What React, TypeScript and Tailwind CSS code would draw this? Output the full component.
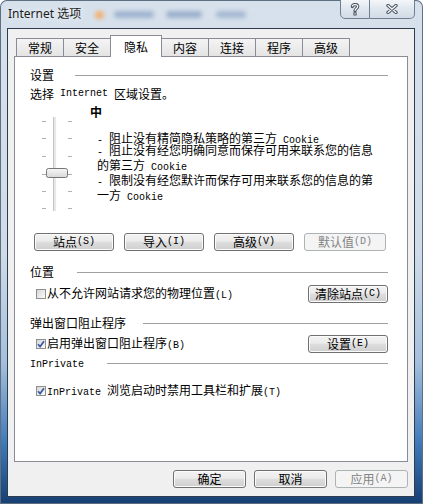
import type { ReactNode } from 'react';

// SimSun-like half-width latin: 6px per char
const M = ({ children }: { children: ReactNode }) => (
    <span className="[font-family:'Liberation_Mono',monospace] text-[10px]">{children}</span>
);

function Btn({ children, className = '', disabled = false }: { children: ReactNode; className?: string; disabled?: boolean }) {
    return (
        <div
            className={
                'h-[18px] flex items-center justify-center rounded-[3px] border text-[12px] leading-none ' +
                (disabled
                    ? 'border-[#adb2b5] bg-[#f4f4f4] text-[#838383] '
                    : 'border-[#707070] bg-[linear-gradient(#f3f3f3_0%,#ebebeb_45%,#dddddd_52%,#cfcfcf_100%)] shadow-[inset_0_0_0_1px_#fbfbfb] text-black ') +
                className
            }
        >
            {children}
        </div>
    );
}

function Header({ children, labelW }: { children: ReactNode; labelW: string }) {
    return (
        <div className="flex items-center h-[16px]">
            <div className={labelW + ' shrink-0'}>{children}</div>
            <div className="flex-1 h-px bg-[#a0a0a0]" />
        </div>
    );
}

function Check({ checked = false }: { checked?: boolean }) {
    return (
        <span className="w-[10px] h-[10px] shrink-0 border border-[#8e8f8f] bg-[linear-gradient(135deg,#d6d6d6,#fbfbfb)] flex items-center justify-center">
            {checked && (
                <svg width="8" height="8" viewBox="0 0 8 8">
                    <path d="M1 4.2 L3.1 6.6 L7 1.2" stroke="#3b5aa3" strokeWidth="1.7" fill="none" />
                </svg>
            )}
        </span>
    );
}

function Tab({ label, active = false }: { label: string; active?: boolean }) {
    if (active) {
        return (
            <div className="relative z-10 -ml-px -mb-px w-[52px] h-[22px] bg-white border border-b-0 border-[#898c95] flex justify-center pt-[2px] text-[12px]">
                {label}
            </div>
        );
    }
    return (
        <div className="-ml-px first:ml-0 w-[48px] h-[18px] bg-[linear-gradient(#f4f4f4,#e4e4e4)] border border-b-0 border-[#898c95] flex items-center justify-center text-[12px]">
            {label}
        </div>
    );
}

function Slider() {
    const ticks = [5, 22, 40, 58, 75, 92];
    return (
        <svg width="36" height="96" viewBox="0 0 36 96" className="shrink-0">
            <defs>
                <linearGradient id="thumb" x1="0" y1="0" x2="0" y2="1">
                    <stop offset="0" stopColor="#f7f7f7" />
                    <stop offset="1" stopColor="#d8d8d8" />
                </linearGradient>
            </defs>
            <rect x="13" y="1" width="4" height="94" fill="#e8e8e8" />
            <line x1="13.5" y1="1" x2="13.5" y2="95" stroke="#c4c4c4" />
            <line x1="16.5" y1="1" x2="16.5" y2="95" stroke="#fdfdfd" />
            {ticks.map(t => (
                <g key={t}>
                    <line x1="2" y1={t + 0.5} x2="6" y2={t + 0.5} stroke="#b0b0b0" />
                    <line x1="28" y1={t + 0.5} x2="32" y2={t + 0.5} stroke="#b0b0b0" />
                </g>
            ))}
            <rect x="6.5" y="52.5" width="21" height="9" rx="2" fill="url(#thumb)" stroke="#767676" />
        </svg>
    );
}

export default function App() {
    return (
        <div className="w-[423px] h-[504px] flex flex-col rounded-t-[7px] overflow-hidden shadow-[inset_0_0_0_1px_#5f6f82] bg-[linear-gradient(#d7e1ec_0%,#cfdbe8_50%,#a4bfdc_72%,#3f79b8_88%,#163f72_100%)] [font-family:'Noto_Sans_CJK_SC',sans-serif] text-black">
            {/* Title bar */}
            <div className="h-[28px] flex items-start shrink-0">
                <div className="pl-[8px] pt-[6px] text-[12px] leading-[16px] text-[#1b1b1b] [font-family:'Noto_Sans','Noto_Sans_CJK_SC',sans-serif] [text-shadow:0_0_6px_#ffffff]">
                    Internet 选项
                </div>
                <div className="ml-[14px] mt-[11px] w-[9px] h-[8px] rounded-full bg-[#f0b070] blur-[2px]" />
                <div className="ml-[10px] mt-[11px] w-[40px] h-[7px] rounded-full bg-[#9fb3cf] blur-[2px]" />
                <div className="ml-[12px] mt-[11px] w-[36px] h-[7px] rounded-full bg-[#9cb0cc] blur-[2px]" />
                <div className="ml-[14px] mt-[11px] w-[30px] h-[7px] rounded-full bg-[#a6b9d3] blur-[2px]" />
                <div className="ml-auto mr-[8px] -mt-px flex h-[20px]">
                    <div className="w-[30px] border border-[#6f7f92] rounded-bl-[5px] bg-[linear-gradient(#f3f6f9,#dfe6ee_50%,#d2dbe6)] flex items-center justify-center">
                        <svg width="10" height="13" viewBox="0 0 10 13">
                            <path d="M2.3 3.6 C2.3 0.9 7.7 0.9 7.7 3.6 C7.7 5.6 5 5.6 5 7.8" stroke="#4a5462" strokeWidth="3.2" fill="none" strokeLinecap="round" />
                            <rect x="3.4" y="9.3" width="3.2" height="3.2" fill="#4a5462" />
                            <path d="M2.3 3.6 C2.3 0.9 7.7 0.9 7.7 3.6 C7.7 5.6 5 5.6 5 7.8" stroke="#ffffff" strokeWidth="1.2" fill="none" />
                            <rect x="4.4" y="10.3" width="1.2" height="1.2" fill="#ffffff" />
                        </svg>
                    </div>
                    <div className="w-[45px] border border-l-0 border-[#6f7f92] rounded-br-[5px] bg-[linear-gradient(#f3f6f9,#dfe6ee_50%,#d2dbe6)] flex items-center justify-center">
                        <svg width="12" height="10" viewBox="0 0 12 10">
                            <path d="M2 1.5 L10 8.5 M10 1.5 L2 8.5" stroke="#4a5462" strokeWidth="3.4" strokeLinecap="round" />
                            <path d="M2 1.5 L10 8.5 M10 1.5 L2 8.5" stroke="#ffffff" strokeWidth="1.3" strokeLinecap="round" />
                        </svg>
                    </div>
                </div>
            </div>

            {/* Client area */}
            <div className="flex-1 ml-[7px] mr-[8px] mb-[7px] border border-[#2f3c4c] bg-[#f0f0f0] flex flex-col pt-[6px] pl-[6px] pr-[6px]">
                <div className="flex items-end h-[21px] pl-[2px] shrink-0">
                    <Tab label="常规" />
                    <Tab label="安全" />
                    <Tab label="隐私" active />
                    <Tab label="内容" />
                    <Tab label="连接" />
                    <Tab label="程序" />
                    <Tab label="高级" />
                </div>

                <div className="flex-1 bg-white border border-[#898c95] pl-[15px] pr-[19px] pt-[10px] flex flex-col text-[12px] leading-[16px]">
                    <Header labelW="w-[45px]">设置</Header>
                    <div className="mt-[3px] h-[16px] flex items-center whitespace-pre">
                        选择<M> Internet </M>区域设置。
                    </div>
                    <div className="mt-[2px] h-[16px] pl-[60px] font-bold">中</div>

                    <div className="-mt-[4px] h-[96px] flex">
                        <div className="ml-[10px]">
                            <Slider />
                        </div>
                        <div className="ml-[21px] pt-[16px] leading-[12px] flex flex-col whitespace-pre">
                            <div><M>- </M>阻止没有精简隐私策略的第三方<M> Cookie</M></div>
                            <div className="-mt-[3px]"><M>- </M>阻止没有经您明确同意而保存可用来联系您的信息</div>
                            <div>的第三方<M> Cookie</M></div>
                            <div><M>- </M>限制没有经您默许而保存可用来联系您的信息的第</div>
                            <div>一方<M> Cookie</M></div>
                        </div>
                    </div>

                    <div className="mt-[21px] pl-[4px] flex gap-[10px]">
                        <Btn className="w-[80px]">站点<M>(S)</M></Btn>
                        <Btn className="w-[80px]">导入<M>(I)</M></Btn>
                        <Btn className="w-[80px]">高级<M>(V)</M></Btn>
                        <Btn className="w-[82px]" disabled>默认值<M>(D)</M></Btn>
                    </div>

                    <div className="mt-[13px]">
                        <Header labelW="w-[47px]">位置</Header>
                    </div>
                    <div className="mt-[5px] h-[18px] flex items-center pl-[6px]">
                        <Check />
                        <span className="ml-[1px]">从不允许网站请求您的物理位置<M>(L)</M></span>
                        <Btn className="w-[80px] ml-auto">清除站点<M>(C)</M></Btn>
                    </div>

                    <div className="mt-[12px]">
                        <Header labelW="w-[113px]">弹出窗口阻止程序</Header>
                    </div>
                    <div className="mt-[4px] h-[18px] flex items-center pl-[6px]">
                        <Check checked />
                        <span className="ml-[1px]">启用弹出窗口阻止程序<M>(B)</M></span>
                        <Btn className="w-[80px] ml-auto">设置<M>(E)</M></Btn>
                    </div>

                    <div className="mt-[2px]">
                        <Header labelW="w-[77px]"><M>InPrivate</M></Header>
                    </div>
                    <div className="mt-[12px] h-[16px] flex items-center pl-[6px] whitespace-pre">
                        <Check checked />
                        <span className="ml-[1px]"><M>InPrivate </M>浏览启动时禁用工具栏和扩展<M>(T)</M></span>
                    </div>
                </div>

                <div className="h-[34px] shrink-0 flex justify-end items-start pt-[8px] gap-[8px]">
                    <Btn className="w-[73px]">确定</Btn>
                    <Btn className="w-[73px]">取消</Btn>
                    <Btn className="w-[73px]" disabled>应用<M>(A)</M></Btn>
                </div>
            </div>
        </div>
    );
}
